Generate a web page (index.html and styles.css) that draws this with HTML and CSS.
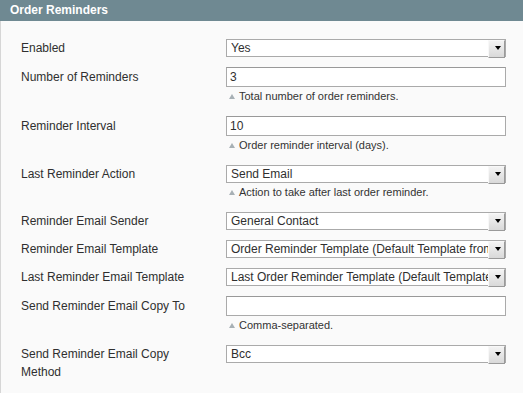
FILE: index.html
```html
<!DOCTYPE html>
<html>
	<head>
		<meta charset="utf-8">
		<title>Order Reminders</title>
		<link rel="stylesheet" href="styles.css">
	</head>
	<body>
		<div class="box">
			<div class="box-head">Order Reminders</div>
			<div class="box-body">
				<div class="row">
					<label class="lbl">Enabled</label>
					<div class="val">
						<span class="sel"><select><option>Yes</option></select></span>
					</div>
				</div>
				<div class="row">
					<label class="lbl lbl-in">Number of Reminders</label>
					<div class="val">
						<input class="txt" type="text" value="3">
						<p class="note">Total number of order reminders.</p>
					</div>
				</div>
				<div class="row">
					<label class="lbl lbl-in">Reminder Interval</label>
					<div class="val">
						<input class="txt" type="text" value="10">
						<p class="note">Order reminder interval (days).</p>
					</div>
				</div>
				<div class="row">
					<label class="lbl">Last Reminder Action</label>
					<div class="val">
						<span class="sel"><select><option>Send Email</option></select></span>
						<p class="note">Action to take after last order reminder.</p>
					</div>
				</div>
				<div class="row">
					<label class="lbl">Reminder Email Sender</label>
					<div class="val">
						<span class="sel"><select><option>General Contact</option></select></span>
					</div>
				</div>
				<div class="row">
					<label class="lbl">Reminder Email Template</label>
					<div class="val">
						<span class="sel"><select><option>Order Reminder Template (Default Template from Locale)</option></select></span>
					</div>
				</div>
				<div class="row">
					<label class="lbl">Last Reminder Email Template</label>
					<div class="val">
						<span class="sel"><select><option>Last Order Reminder Template (Default Template from Locale)</option></select></span>
					</div>
				</div>
				<div class="row">
					<label class="lbl lbl-in">Send Reminder Email Copy To</label>
					<div class="val">
						<input class="txt" type="text" value="">
						<p class="note">Comma-separated.</p>
					</div>
				</div>
				<div class="row">
					<label class="lbl">Send Reminder Email Copy Method</label>
					<div class="val">
						<span class="sel"><select><option>Bcc</option></select></span>
					</div>
				</div>
			</div>
		</div>
	</body>
</html>
```

FILE: styles.css
```css
*{margin: 0;padding: 0;box-sizing: border-box;}
body{
	font-family: "Liberation Sans", Arial, sans-serif;
	font-size: 12px;
	color: #2f2f2f;
	background: #fafafa;
}
.box{
	width: 540px;
}
.box-head{
	height: 21px;
	line-height: 21px;
	padding-left: 10px;
	background: #6f8992;
	color: #fff;
	font-weight: bold;
	font-size: 12px;
}
.box-body{
	background: #fafafa;
	border-left: 1px solid #d6d6d6;
	padding: 18px 0 20px 20px;
	min-height: 372px;
}
.row{
	display: flex;
	padding-bottom: 10px;
}
.lbl{
	width: 205px;
	flex: none;
	line-height: 18px;
	padding-right: 40px;
}
.lbl-in{
	padding-top: 1px;
}
.val{
	width: 280px;
	flex: none;
}
.sel{
	display: block;
	position: relative;
	height: 18px;
}
.sel select{
	-webkit-appearance: none;
	appearance: none;
	display: block;
	width: 100%;
	height: 18px;
	border: 1px solid #aaa;
	border-radius: 0;
	background: #fff;
	font-family: "Liberation Sans", Arial, sans-serif;
	font-size: 12px;
	color: #2f2f2f;
	padding: 0 16px 0 4px;
	outline: none;
}
.sel::after{
	content: "";
	position: absolute;
	right: 1px;
	top: 1px;
	width: 15px;
	height: 16px;
	background: linear-gradient(#f3f3f3, #d9d9d9);
	border-right: 1px solid #9a9a9a;
	border-bottom: 1px solid #9a9a9a;
	border-left: 1px solid #f8f8f8;
	border-top: 1px solid #f8f8f8;
}
.sel::before{
	content: "";
	position: absolute;
	right: 5px;
	top: 7px;
	width: 0;
	height: 0;
	border-left: 3px solid transparent;
	border-right: 3px solid transparent;
	border-top: 4px solid #000;
	z-index: 1;
}
.txt{
	display: block;
	width: 100%;
	height: 20px;
	border: 1px solid #aaa;
	border-top-color: #999;
	background: #fff;
	font-family: "Liberation Sans", Arial, sans-serif;
	font-size: 12px;
	color: #2f2f2f;
	padding: 0 3px;
	outline: none;
}
.note{
	height: 19px;
	line-height: 19px;
	font-size: 11px;
	color: #333;
	padding-left: 13px;
	position: relative;
}
.note::before{
	content: "";
	position: absolute;
	left: 3px;
	top: 7px;
	width: 0;
	height: 0;
	border-left: 3px solid transparent;
	border-right: 3px solid transparent;
	border-bottom: 5px solid #a7b0b5;
}
```
